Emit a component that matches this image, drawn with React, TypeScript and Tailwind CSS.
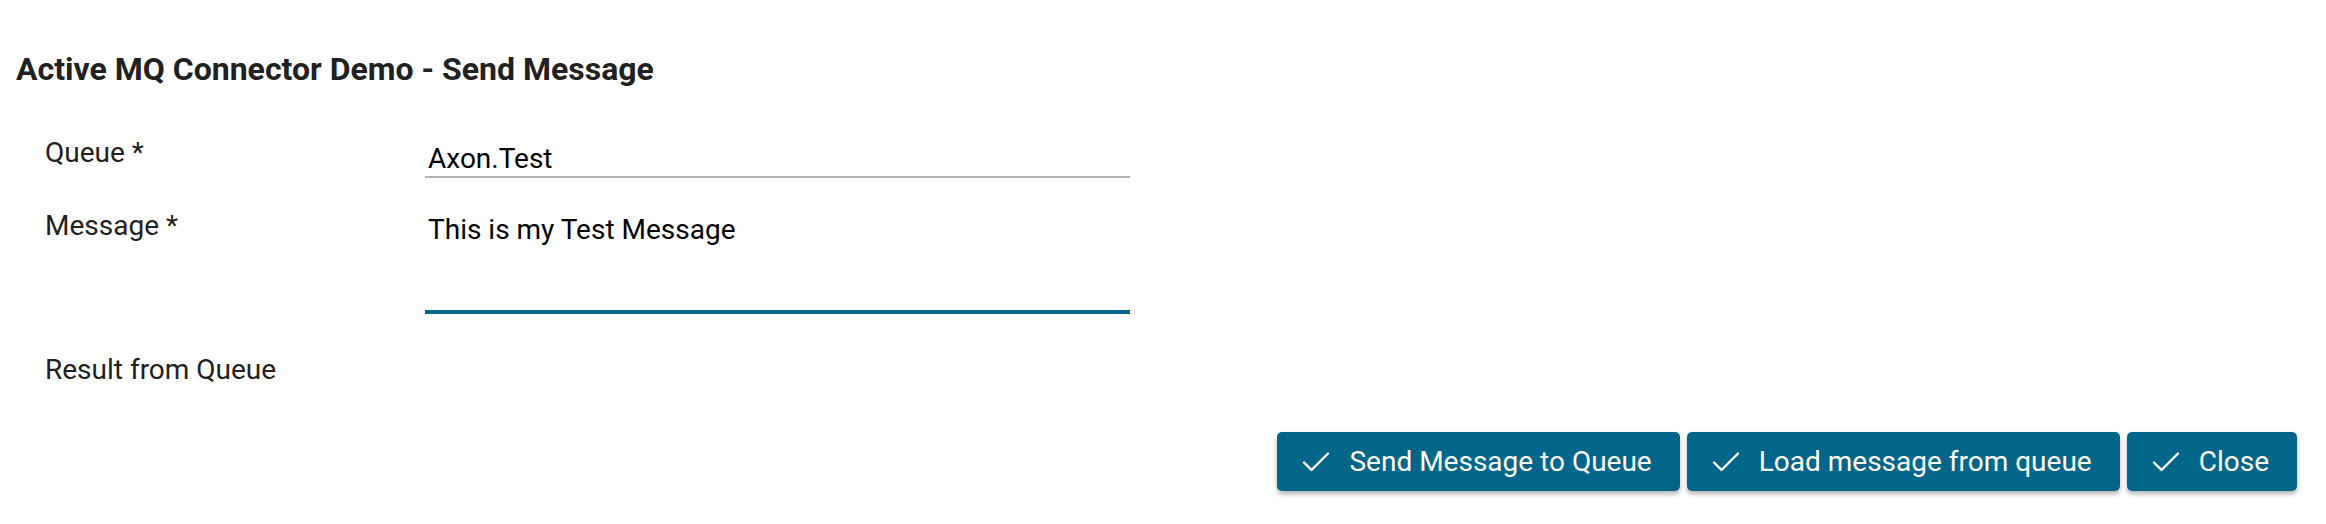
import React from 'react';

// check glyph used on the dialog buttons
const CheckIcon = () => (
    <svg width="28" height="22" viewBox="0 0 28 22" fill="none" className="shrink-0">
        <path d="M2 11.5 L9.5 19 L26 2.5" stroke="white" strokeWidth="2.4" strokeLinecap="round" strokeLinejoin="round" />
    </svg>
);

const ActionButton = ({ label }: { label: string }) => (
    <button className="h-[59px] flex items-center gap-[19px] pl-[25px] pr-[28px] bg-[#01668a] text-white text-[28px] leading-[36px] rounded-[5px] shadow-[0_3px_5px_rgba(0,0,0,0.3)]">
        <CheckIcon />
        {label}
    </button>
);

export default function App() {
    return (
        <div className="w-full h-[524px] bg-white text-[#212121] font-['Roboto',sans-serif] overflow-hidden">
            <h1 className="pt-[51px] pl-4 text-[32px] leading-[36px] font-bold">
                Active MQ Connector Demo - Send Message
            </h1>

            <div className="pl-[45px] mt-[48px]">
                {/* Queue */}
                <div className="flex items-start">
                    <label className="w-[380px] text-[28px] leading-[36px]">Queue *</label>
                    <div className="pt-[5px]">
                        <input
                            readOnly
                            value="Axon.Test"
                            className="w-[705px] h-[38px] pl-[3px] text-[28px] leading-[36px] text-black border-b-2 border-[#b3b3b3] outline-none"
                        />
                    </div>
                </div>

                {/* Message */}
                <div className="flex items-start mt-[30px]">
                    <label className="w-[380px] text-[28px] leading-[36px]">Message *</label>
                    <div className="pt-[4px]">
                        <textarea
                            readOnly
                            value="This is my Test Message"
                            className="block w-[705px] h-[102px] pl-[3px] resize-none text-[28px] leading-[36px] text-black border-b-4 border-[#01668a] outline-none"
                        />
                    </div>
                </div>

                <div className="mt-[38px] text-[28px] leading-[36px]">Result from Queue</div>
            </div>

            <div className="flex justify-end gap-[7px] pr-[29px] mt-[44px]">
                <ActionButton label="Send Message to Queue" />
                <ActionButton label="Load message from queue" />
                <ActionButton label="Close" />
            </div>
        </div>
    );
}
